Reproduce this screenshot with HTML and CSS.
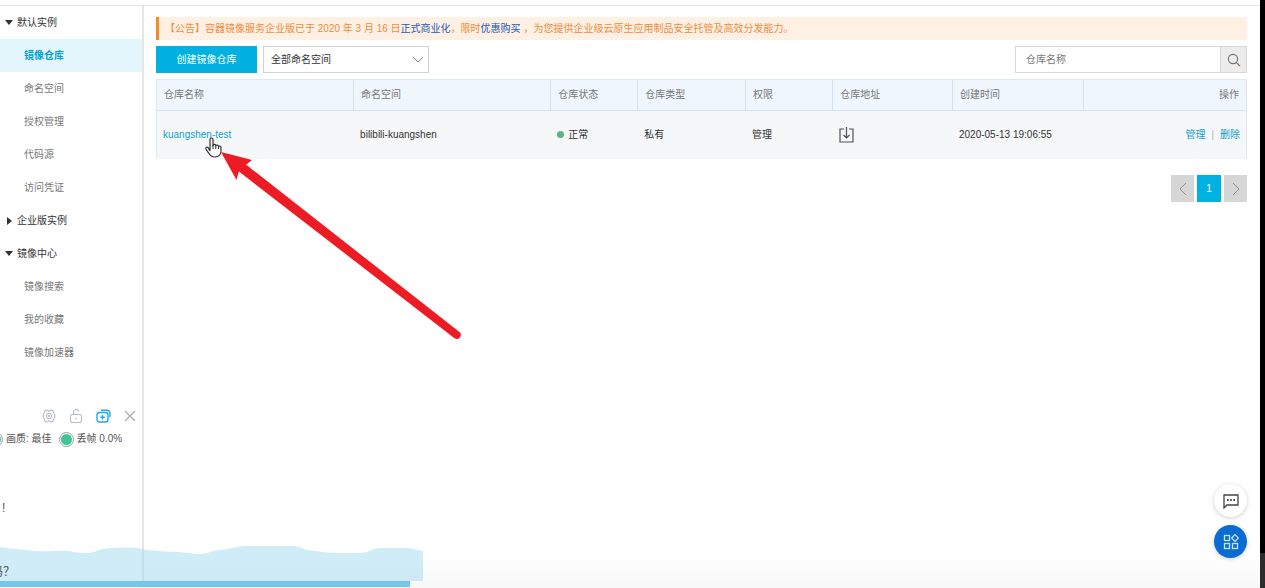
FILE: index.html
```html
<!DOCTYPE html>
<html lang="zh-CN">
<head>
<meta charset="utf-8">
<meta name="viewport" content="width=device-width, initial-scale=1">
<title>容器镜像服务 - 镜像仓库</title>
<link rel="stylesheet" href="styles.css">
</head>
<body>
<div class="screen">
  <div class="console">
    <aside class="sidebar">
      <nav class="nav">
        <button class="nav-group" type="button"><span class="caret caret-down"></span>默认实例</button>
        <a class="nav-item active" href="#">镜像仓库</a>
        <a class="nav-item" href="#">命名空间</a>
        <a class="nav-item" href="#">授权管理</a>
        <a class="nav-item" href="#">代码源</a>
        <a class="nav-item" href="#">访问凭证</a>
        <button class="nav-group" type="button"><span class="caret caret-right"></span>企业版实例</button>
        <button class="nav-group" type="button"><span class="caret caret-down"></span>镜像中心</button>
        <a class="nav-item" href="#">镜像搜索</a>
        <a class="nav-item" href="#">我的收藏</a>
        <a class="nav-item" href="#">镜像加速器</a>
      </nav>
      <section class="recorder">
        <div class="tools">
          <button class="tool" type="button" aria-label="设置">
            <svg width="14" height="14" viewBox="0 0 14 14" fill="none" stroke="#b4bcc6" stroke-width="1.1" stroke-linejoin="round"><path d="M4.500 1l1.300.9h2.400L9.500 1l2 1.200.1 1.600L12.800 6v2l-1.200 2.200-.1 1.600-2 1.200-1.300-.9H5.800l-1.300.9-2-1.200-.1-1.600L1.200 8V6l1.200-2.200.1-1.600z"/><path d="M5.600 4.500h2.800L9.900 7 8.400 9.500H5.600L4.100 7z"/><circle cx="7" cy="7" r=".5"/></svg>
          </button>
          <button class="tool" type="button" aria-label="解锁">
            <svg width="14" height="14" viewBox="0 0 14 14" fill="none" stroke="#b4bcc6" stroke-width="1.1"><rect x="1.500" y="5.500" width="11" height="8" rx="2"/><path d="M4.500 5.500V3.200a2.500 2.500 0 0 1 5-.4M7 8.500v2"/></svg>
          </button>
          <button class="tool" type="button" aria-label="置顶">
            <svg width="15" height="14" viewBox="0 0 15 14" fill="none" stroke="#1ea7e8" stroke-width="1.4"><rect x="1" y="3.500" width="11" height="9.500" rx="2.500"/><path d="M5 1.200h6a3 3 0 0 1 3 3V8M6.500 6v4.500M4.300 8.200h4.400"/></svg>
          </button>
          <button class="tool" type="button" aria-label="关闭">
            <svg width="14" height="14" viewBox="0 0 14 14" fill="none" stroke="#a4aab0" stroke-width="1.1"><path d="M2 2l10 10M12 2L2 12"/></svg>
          </button>
        </div>
        <div class="stats">
          <span class="stat"><span class="lamp"></span>画质: 最佳</span>
          <span class="stat"><span class="lamp"></span>丢帧 0.0%</span>
        </div>
        <p class="chat">!</p>
      </section>
    </aside>

    <main class="main">
      <div class="notice">【公告】容器镜像服务企业版已于 2020 年 3 月 16 日<a href="#">正式商业化</a>，限时<a href="#">优惠购买</a> ，为您提供企业级云原生应用制品安全托管及高效分发能力。</div>

      <div class="toolbar">
        <button class="create" type="button">创建镜像仓库</button>
        <div class="select-wrap">
          <select class="select" aria-label="命名空间"><option>全部命名空间</option></select>
          <svg class="chevron" width="12" height="8" viewBox="0 0 12 8" fill="none" stroke="#8a8a8a"><path d="M1 1l5 5 5-5"/></svg>
        </div>
        <form class="search">
          <input class="search-input" type="text" placeholder="仓库名称" aria-label="仓库名称">
          <button class="search-button" type="button" aria-label="搜索">
            <svg width="14" height="14" viewBox="0 0 14 14" fill="none" stroke="#707070" stroke-width="1.1"><circle cx="6" cy="6" r="4.600"/><path d="M9.300 9.300l3.700 3.700"/></svg>
          </button>
        </form>
      </div>

      <table class="repos">
        <thead>
          <tr>
            <th class="col-name">仓库名称</th>
            <th class="col-name">命名空间</th>
            <th class="col-small">仓库状态</th>
            <th class="col-type">仓库类型</th>
            <th class="col-small">权限</th>
            <th class="col-address">仓库地址</th>
            <th class="col-time">创建时间</th>
            <th class="col-actions">操作</th>
          </tr>
        </thead>
        <tbody>
          <tr>
            <td><a href="#">kuangshen-test</a></td>
            <td>bilibili-kuangshen</td>
            <td><span class="status">正常</span></td>
            <td>私有</td>
            <td>管理</td>
            <td>
              <button class="address" type="button" aria-label="仓库地址">
                <svg width="15" height="16" viewBox="0 0 15 16" fill="none" stroke="#4c5158" stroke-width="1.2"><path d="M5 2H1v13h13V2h-4M7.500 0v11M4.500 8l3 3 3-3"/></svg>
              </button>
            </td>
            <td>2020-05-13 19:06:55</td>
            <td class="col-actions"><a href="#">管理</a><span class="divider">|</span><a href="#">删除</a></td>
          </tr>
        </tbody>
      </table>

      <div class="pager">
        <button class="page" type="button" aria-label="上一页"><svg width="10" height="14" viewBox="0 0 10 14" fill="none" stroke="#909090"><path d="M8 1L2 7l6 6"/></svg></button>
        <button class="page current" type="button">1</button>
        <button class="page" type="button" aria-label="下一页"><svg width="10" height="14" viewBox="0 0 10 14" fill="none" stroke="#909090"><path d="M2 1l6 6-6 6"/></svg></button>
      </div>
    </main>
  </div>
  <div class="edge"><div class="edge-foot"></div></div>

  <div class="fade"></div>

  <div class="floaters">
    <button class="floater" type="button" aria-label="咨询">
      <svg width="16" height="16" viewBox="0 0 16 16" fill="none" stroke="#444" stroke-width="1.3"><path d="M1 2h14v10H4l-3 3z"/><path d="M4 7h1.600M7.200 7h1.600M10.400 7H12" stroke-width="1.8"/></svg>
    </button>
    <button class="floater floater-blue" type="button" aria-label="应用">
      <svg width="16" height="16" viewBox="0 0 16 16" fill="none" stroke="#bfe6ff" stroke-width="1.300"><rect x="1.500" y="1.500" width="5" height="5"/><rect x="1.500" y="9.500" width="5" height="5"/><rect x="9.500" y="9.500" width="5" height="5"/><path d="M12 .6L15.400 4 12 7.400 8.600 4z"/></svg>
    </button>
  </div>

  <div class="wave">
    <svg width="423" height="42" viewBox="0 0 423 42"><path fill="#a5dcf0" fill-opacity=".52" d="M0 1C12 3 22 3 34 5C46 6 56 4 70 5C82 8 92 8 98 4C112 1 130 1 142 3C156 6 174 5 190 7C206 10 208 5 220 4C232 3 232 1 246 0H294C304 1 300 4 316 5C328 7 334 7 360 7C370 7 370 2 382 2H408C414 3 418 4 423 5V35H0z"/><path fill="#74c7e8" d="M0 35h410v6H0z"/></svg>
    <p class="wave-text">吗？</p>
  </div>

  <svg class="pointer" width="270" height="210" viewBox="0 0 270 210">
    <path d="M7 15V3.500c0-2 3-2 3 0V9c1-1.200 2.600-.8 2.800.6 1-1 2.600-.6 2.800.8 1.200-.8 2.400 0 2.400 1.400V15c0 3-2 6-6 6-3.500 0-5-1.500-6.500-4.200L3 13c-.8-1.600 1-2.600 2.200-1.400z" fill="#fff" stroke="#333" stroke-width="1.200"/>
    <path d="M10 9v4M12.800 10v3M15.500 11v2" fill="none" stroke="#333"/>
    <path d="M18 16L49 24 41.500 30 36 35 33.500 44z" fill="#ed1c24"/>
    <path d="M36 30L41 27 256.500 196A4 4 0 0 1 251.500 202.200L34 34z" fill="#ed1c24"/>
  </svg>
</div>
</body>
</html>
```
FILE: styles.css
```css
* { box-sizing: border-box; }

body {
  margin: 0;
  background: #fff;
  color: #333;
  font-family: "Liberation Sans", "Noto Sans CJK SC", sans-serif;
  font-size: 10px;
  line-height: 16px;
}

button, input, select { font: inherit; color: inherit; }
button { padding: 0; border: 0; background: none; }
a { color: #159fcb; text-decoration: none; }
p { margin: 0; }
svg { display: block; flex: none; }

.screen {
  position: relative;
  display: flex;
  min-height: 100vh;
  overflow: hidden;
}

.console {
  flex: 1;
  display: flex;
  margin-top: 5px;
  border-top: 1px solid #e2e3e9;
}

.edge {
  width: 5px;
  background: #000;
  display: flex;
  align-items: flex-end;
}
.edge-foot { width: 100%; height: 35px; background: #2c2c2c; }

/* Sidebar */
.sidebar {
  flex: none;
  width: 144px;
  border-right: 2px solid #e6e6e6;
}
.nav { display: flex; flex-direction: column; }
.nav-group, .nav-item {
  display: flex;
  align-items: center;
  height: 33px;
}
.nav-group { padding-left: 5px; gap: 4px; color: #333; }
.nav-item { padding-left: 24px; color: #777; }
.nav-item.active { background: #e2f6fb; color: #00a2d4; font-weight: bold; }
.caret { width: 8px; }
.caret::before { content: ""; display: block; width: 0; border: 4px solid transparent; }
.caret-down::before { border-top: 5px solid #333; border-bottom: 0; }
.caret-right::before { margin-left: 2px; border-left: 5px solid #333; border-right: 0; }

/* Recorder status */
.recorder { padding-top: 39px; color: #555; }
.tools { display: flex; gap: 13px; padding-left: 42px; }
.tool { width: 14px; height: 16px; }
.stats { display: flex; gap: 7px; margin-top: 7px; margin-left: -12px; }
.stat { display: flex; align-items: center; gap: 3px; white-space: nowrap; }
.lamp {
  width: 15px;
  height: 15px;
  border: 1px solid #8fa8a0;
  border-radius: 50%;
  padding: 1px;
  background: #42c49a content-box;
}
.chat { margin-top: 53px; padding-left: 2px; font-size: 12px; }

/* Main */
.main { flex: 1; min-width: 0; padding: 11px 13px 0 12px; }

.notice {
  height: 23px;
  padding-left: 6px;
  border-left: 3px solid #f28b2c;
  background: #fef0e3;
  color: #ed8c3c;
  line-height: 23px;
  white-space: nowrap;
}
.notice a { color: #2259b5; }

.toolbar { display: flex; margin-top: 6px; height: 27px; }
.create { width: 101px; background: #00b1e1; color: #fff; }
.select-wrap { position: relative; width: 166px; margin-left: 6px; }
.select {
  width: 100%;
  height: 100%;
  padding: 0 24px 0 7px;
  border: 1px solid #d4d4d4;
  border-radius: 0;
  background: #fff;
  appearance: none;
}
.chevron { position: absolute; right: 5px; top: 10px; pointer-events: none; }
.search { display: flex; width: 232px; margin-left: auto; border: 1px solid #d8d6d6; }
.search-input { flex: 1; min-width: 0; padding: 0 10px; border: 0; background: #fff; }
.search-input::placeholder { color: #777; opacity: 1; }
.search-button {
  display: flex;
  align-items: center;
  justify-content: center;
  width: 26px;
  border-left: 1px solid #d8d6d6;
  background: #ececec;
}

.repos {
  width: 100%;
  margin-top: 6px;
  table-layout: fixed;
  border: 1px solid #dfe8f1;
  border-bottom-color: #f3f4f6;
  border-spacing: 0;
}
.repos th {
  height: 31px;
  padding: 0 7px;
  border-right: 1px solid #d5e1ee;
  border-bottom: 1px solid #d5e4f2;
  background: #eff6fe;
  color: #777;
  font-weight: normal;
  text-align: left;
}
.repos td { height: 47px; padding: 0 6px; background: #f6f7f9; }
.repos th:last-child { border-right: 0; }
.col-name { width: 18.1%; }
.col-small { width: 8%; }
.col-type { width: 9.9%; }
.col-address { width: 11%; }
.col-time { width: 12%; }
.repos .col-actions { text-align: right; }
.status { display: flex; align-items: center; gap: 4px; }
.status::before { content: ""; width: 7px; height: 7px; border-radius: 50%; background: #5bb57c; }
.address { display: block; }
.divider { padding: 0 6px; color: #b5b5b5; }

.pager { display: flex; justify-content: flex-end; gap: 3px; margin-top: 16px; }
.page {
  display: flex;
  align-items: center;
  justify-content: center;
  width: 23px;
  height: 27px;
  background: #d6d6d7;
}
.page.current { width: 24px; background: #00b1e1; color: #fff; }

/* Overlays */
.fade {
  position: absolute;
  left: 144px;
  right: 5px;
  bottom: 0;
  height: 35px;
  background: linear-gradient(rgba(0, 0, 0, 0), rgba(0, 0, 0, 0.03));
}
.floaters {
  position: absolute;
  right: 18px;
  bottom: 30px;
  display: flex;
  flex-direction: column;
  gap: 8px;
}
.floater {
  display: flex;
  align-items: center;
  justify-content: center;
  width: 33px;
  height: 33px;
  border-radius: 50%;
  background: #fff;
  box-shadow: 0 1px 4px rgba(0, 0, 0, 0.2);
}
.floater-blue { background: #0a6cd2; }
.wave { position: absolute; left: 0; bottom: 0; }
.wave-text { position: absolute; left: -9px; bottom: 8px; color: #556; font-size: 12px; white-space: nowrap; }
.pointer { position: absolute; left: 203px; top: 136px; pointer-events: none; }
```
